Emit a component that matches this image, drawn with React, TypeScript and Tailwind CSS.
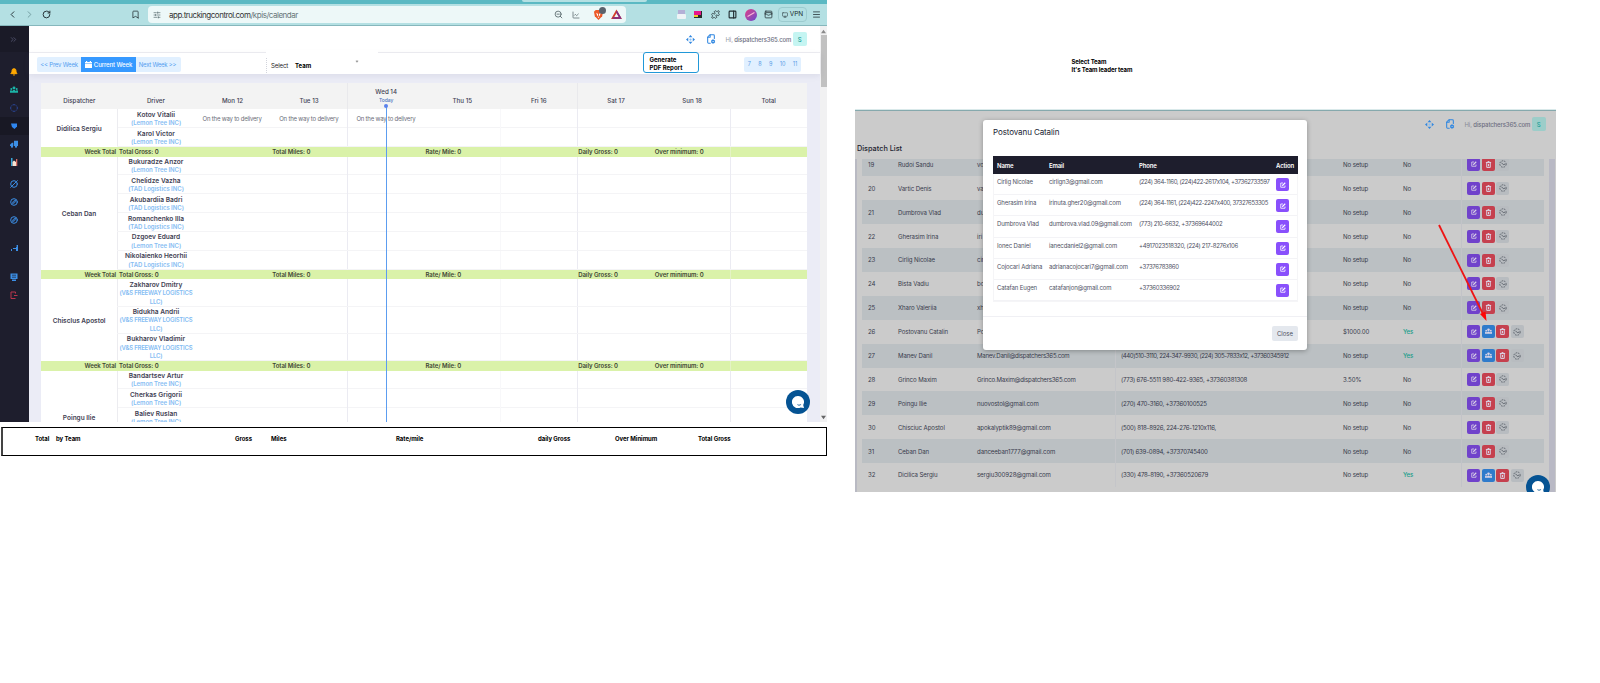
import React from "react";
import {
  ChevronLeft, ChevronRight, RotateCw, Bookmark, ZoomOut, Puzzle, PanelRight, Menu, WalletCards,
  ChevronsRight, Bell, CircleDashed, Compass, CircleSlash2,
  FileCog, SlidersHorizontal, Monitor, LineChart,
} from "lucide-react";

const dispatchers = [
  {
    name: "Didilica Sergiu",
    rowClass: "h-[18.85px]",
    status: true,
    drivers: [["Kotov Vitalii", "(Lemon Tree INC)"], ["Karol Victor", "(Lemon Tree INC)"]],
  },
  {
    name: "Ceban Dan",
    rowClass: "h-[18.85px]",
    status: false,
    drivers: [
      ["Bukuradze Anzor", "(Lemon Tree INC)"],
      ["Chelidze Vazha", "(TAD Logistics INC)"],
      ["Akubardiia Badri", "(TAD Logistics INC)"],
      ["Romanchenko Illa", "(TAD Logistics INC)"],
      ["Dzgoev Eduard", "(Lemon Tree INC)"],
      ["Nikolaienko Heorhii", "(TAD Logistics INC)"],
    ],
  },
  {
    name: "Chisclus Apostol",
    rowClass: "h-[27.2px]",
    status: false,
    drivers: [
      ["Zakharov Dmitry", "(V&S FREEWAY LOGISTICS", "LLC)"],
      ["Bidukha Andrii", "(V&S FREEWAY LOGISTICS", "LLC)"],
      ["Bukharov Vladimir", "(V&S FREEWAY LOGISTICS", "LLC)"],
    ],
  },
  {
    name: "Poingu Ilie",
    rowClass: "h-[18.8px]",
    status: false,
    last: true,
    drivers: [
      ["Bandartsev Artur", "(Lemon Tree INC)"],
      ["Cherkas Grigorii", "(Lemon Tree INC)"],
      ["Baliev Ruslan", "(Lemon Tree INC)"],
    ],
  },
];

const days = ["Dispatcher", "Driver", "Mon 12", "Tue 13", "Wed 14", "Thu 15", "Fri 16", "Sat 17", "Sun 18", "Total"];

function Toolbar() {
  return (
    <div className="relative shrink-0">
      <div className="flex h-1 justify-end bg-[#5bb9c3] pr-[180px]">
        <div className="h-0.5 w-[125px] rounded-b-sm bg-[#b4e0e3]" />
      </div>
      <div className="flex h-[22px] items-center border-b border-[#86b7bc] bg-[#b4e0e3] text-[#202c30]">
        <ChevronLeft className="ml-[7px] size-[11px]" />
        <ChevronRight className="ml-[6px] size-[11px] text-[#6f999c]" />
        <RotateCw className="ml-[7px] size-[9px]" strokeWidth={2.5} />
        <Bookmark className="ml-[80px] size-[9px]" />
        <div className="ml-[8px] flex h-[17px] w-[478px] items-center rounded bg-[#edf8f8]">
          <SlidersHorizontal className="ml-[5px] size-2 text-[#53666a]" />
          <span className="ml-[8px] pt-px text-[8px] tracking-[-0.48px] text-[#333]">
            app.truckingcontrol.com<span className="text-[#68777a]">/kpis/calendar</span>
          </span>
          <ZoomOut className="ml-auto size-[9px] text-[#46565a]" />
          <LineChart className="ml-[9px] size-2 text-[#46565a]" />
          <div className="relative ml-[13px]">
            <svg className="size-[11px]" viewBox="0 0 12 12">
              <path d="M3 1h6l2 2-1 5-4 4-4-4-1-5z" fill="#ed5a29" />
              <path d="M3.5 4l2 1.5V8l-1-1zM8.5 4l-2 1.5V8l1-1zM5 8.5h2L6 9.8z" fill="#fff" />
            </svg>
            <div className="absolute -top-0.5 left-[6px] size-[7px] rounded-full bg-[#5b626c]" />
          </div>
          <svg className="mr-[4px] ml-[7px] size-[11px]" viewBox="0 0 12 12">
            <path d="M6 2.5L1.8 9.8h8.4z" fill="none" stroke="#d5402a" strokeWidth="2" />
            <path d="M6 2.5L10.2 9.8H1.8" fill="none" stroke="#7a2e8e" strokeWidth="1.7" />
          </svg>
        </div>
        <div className="ml-[51px] flex h-[9px] w-[9px] flex-col">
          <div className="mx-px h-[4px] bg-[#b3b0d6]" />
          <div className="flex-1 rounded-[1px] bg-[#eef3f6]" />
        </div>
        <div className="ml-[8px] flex h-[7px] w-[8px] flex-col bg-[#262f2a]">
          <div className="h-[4px] w-[7px] bg-[#e8158c]" />
          <div className="h-[2px] w-[4px] bg-[#f0c92d]" />
        </div>
        <Puzzle className="ml-[9px] size-[9px]" />
        <PanelRight className="ml-[8px] size-[9px]" strokeWidth={3} />
        <div className="ml-[8px] flex size-3 items-center justify-center rounded-full bg-gradient-to-br from-[#e13384] to-[#6840ce]">
          <div className="h-px w-2 -rotate-30 bg-[#ffb3d8]" />
        </div>
        <WalletCards className="ml-[7px] size-[9px]" />
        <div className="ml-[5px] flex h-[15px] w-[29px] items-center justify-center gap-0.5 rounded border border-[#9ccbcf] text-[6.5px]">
          <Monitor className="size-[6px]" />VPN
        </div>
        <Menu className="ml-[5px] size-[9px]" />
      </div>
    </div>
  );
}

function People({ className }: { className: string }) {
  return (
    <svg className={className} viewBox="0 0 12 12" fill="currentColor">
      <circle cx="6" cy="3" r="2.2" /><circle cx="2" cy="4.5" r="1.5" /><circle cx="10" cy="4.5" r="1.5" />
      <path d="M0 10V8c0-2 3-2 3.4 0C4 5.300 8 5.300 8.600 8 9 6 12 6 12 8v2z" />
    </svg>
  );
}

function EditIcon({ className }: { className: string }) {
  return (
    <svg className={className} viewBox="0 0 12 12" fill="none" stroke="currentColor" strokeWidth="1.6">
      <path d="M6 2H1.500v8.500H10V7" /><path d="M4.500 7.500L10.500 1.500" strokeWidth="2.2" />
    </svg>
  );
}

function TrashIcon() {
  return (
    <svg className="size-[7px]" viewBox="0 0 12 12" fill="none" stroke="currentColor" strokeWidth="1.7">
      <path d="M1.500 2.500h9M3 3v8h6V3M6 5v4M4.500 1h3" />
    </svg>
  );
}

function Sidebar() {
  const cell = "flex h-[18px] w-full items-center pl-[9.5px]";
  return (
    <div className="flex w-[29px] shrink-0 flex-col bg-[#1e1e2d] text-[#3c8fe6]">
      <div className="mb-[11px] flex h-[26px] items-center bg-[#1a1a27] pl-[9px] text-[#5a5b78]"><ChevronsRight className="size-[9px]" /></div>
      <div className={cell}><Bell className="size-2 text-[#ffa800]" fill="#ffa800" strokeWidth={3} /></div>
      <div className={cell}><People className="size-2 text-[#1bb5a8]" /></div>
      <div className={cell}><CircleDashed className="size-2 text-[#2d4fae]" strokeWidth={2.5} /></div>
      <div className={`${cell} bg-[#181824]`}>
        <svg className="ml-px size-[6px]" viewBox="0 0 6 6"><path d="M0 .5h6v3L3.500 6 1 4z" fill="#2f86ee" /></svg>
      </div>
      <div className={cell}>
        <svg className="size-2" viewBox="0 0 12 12" fill="currentColor">
          <path d="M6 1h6v8H6zM0 7l3-3h2v5H0z" /><circle cx="3" cy="10" r="1.700" /><circle cx="9" cy="10" r="1.700" />
        </svg>
      </div>
      <div className={cell}>
        <svg className="size-2" viewBox="0 0 8 8">
          <path d="M1 0h1.500v8H1z" fill="#38a5d8" /><path d="M2.500 4L4 2.500 6 4v4H2.500z" fill="#f7e3d2" /><path d="M6 1h1.300v7H6z" fill="#d96e64" />
        </svg>
      </div>
      <div className={`${cell} mt-[4px]`}><CircleSlash2 className="size-2" strokeWidth={3} /></div>
      <div className={cell}><Compass className="size-2" strokeWidth={3} /></div>
      <div className={cell}><Compass className="size-2" strokeWidth={3} /></div>
      <div className={`${cell} mt-[10px]`}>
        <svg className="size-2" viewBox="0 0 8 8"><path d="M1 5h1v2H1zM3 4h3V3h1v4H6V5H3zM6.500 1H8v6H7z" fill="currentColor" /></svg>
      </div>
      <div className={`${cell} mt-[11px]`}>
        <svg className="size-2" viewBox="0 0 8 8">
          <path d="M.5.5h7V6h-7zM2 6.500h4V8H2z" fill="currentColor" /><path d="M2 2.200h4M2 4.200h4" stroke="#1e1e2d" strokeWidth=".7" />
        </svg>
      </div>
      <div className={cell}>
        <svg className="size-2" viewBox="0 0 8 8"><path d="M5.500 1H1v6.500h4.500M5.500 1v1.500M4 4.500h3.500" stroke="#b8344c" fill="none" /></svg>
      </div>
    </div>
  );
}

function Account({ dim }: { dim?: boolean }) {
  return (
    <div className="flex items-center">
      <svg className="size-[9px]" viewBox="0 0 12 12">
        <path d="M6 0l2.5 3h-5zM6 12l2.5-3h-5zM0 6l3-2.5v5zM12 6L9 3.5v5z" fill="#3087e0" />
        <circle cx="6" cy="6" r="1.5" fill="#8cc0f3" />
      </svg>
      <FileCog className="ml-[11px] size-[10px] -scale-x-100 text-[#3087e0]" strokeWidth={2.5} />
      <span className="ml-[10px] w-[63px] text-[6px] font-medium tracking-[-0.12px] whitespace-nowrap text-[#6b6d80]">
        <span className="font-normal opacity-70">Hi, </span>dispatchers365.com
      </span>
      <div className={`ml-[4px] flex size-[14.5px] items-center justify-center rounded-[2px] text-[6px] font-medium text-[#1b9f98] ${dim ? "bg-[#9ccdc9]" : "bg-[#c5f5f2]"}`}>S</div>
    </div>
  );
}

function WeekTotal() {
  return (
    <div className="grid h-[9.7px] grid-cols-10 items-center bg-[#daf2a9] pt-[1px] text-[6px] leading-none font-semibold tracking-[-0.05px] whitespace-nowrap text-[#3d4632]">
      <span className="pr-[1.5px] text-right">Week Total</span>
      <span className="col-span-2 pl-[1.5px]">Total Gross: 0</span>
      <span className="col-span-2 pl-[1.5px]">Total Miles: 0</span>
      <span className="col-span-2 pl-[1.5px]">Rate/ Mile: 0</span>
      <span className="pl-[1px]">Daily Gross: 0</span>
      <span className="pl-[1px]">Over minimum: 0</span>
      <span className="-mt-px h-[9.7px] border-l border-[#e4f3c4]" />
    </div>
  );
}

function Calendar() {
  return (
    <div className="relative h-[339px] w-[766px] overflow-hidden bg-white">
      <div className="grid h-[26.2px] grid-cols-10 bg-[#f3f3f3] text-center text-[6.2px] leading-[8px] font-medium text-[#3f4254]">
        {days.map((d, i) => (
          <div key={d} className={`flex flex-col items-center ${i === 4 || i === 7 ? "border-l border-[#e9e9ec]" : ""}`}>
            {i === 4 ? (
              <><span className="mt-[5px]">Wed 14</span><span className="text-[5px] text-[#4c74bd]">Today</span></>
            ) : <span className="mt-[13.5px]">{d}</span>}
          </div>
        ))}
      </div>
      {dispatchers.map((d) => (
        <div key={d.name}>
          <div className={`flex ${d.last ? "h-[94px]" : ""}`}>
            <div className="flex w-[76.2px] shrink-0 items-center justify-center pt-[1px] text-[6.5px] leading-[8px] font-semibold text-[#3f4254]">{d.name}</div>
            <div className="flex-1">
              {d.drivers.map(([name, company, suffix]) => (
                <div key={name} className={`grid grid-cols-9 border-b border-[#f4f4f6] ${d.rowClass}`}>
                  <div className="border-l border-[#ececf0] pt-[1.5px] text-center text-[6.6px] leading-[8.4px] font-semibold whitespace-nowrap text-[#3f4254]">
                    {name}
                    <div className={`text-[6px] font-semibold text-[#86bdf3] ${suffix ? "tracking-[-0.22px]" : "tracking-[-0.04px]"}`}>{company}{suffix && <><br />{suffix}</>}</div>
                  </div>
                  {[2, 3, 4, 5, 6, 7, 8, 9].map((n) => (
                    <div key={n} className={`text-center text-[6px] leading-[19.5px] tracking-[-0.2px] whitespace-nowrap text-[#6b6d78] ${n === 4 || n === 7 || n === 9 ? "border-l border-[#ebebf2]" : n === 6 ? "border-l border-[#f8f8fa]" : ""}`}>
                      {d.status && name === "Kotov Vitalii" && n < 5 ? "On the way to delivery" : ""}
                    </div>
                  ))}
                </div>
              ))}
            </div>
          </div>
          {!d.last && <WeekTotal />}
        </div>
      ))}
      <div className="absolute top-[23px] left-[344.5px] h-[316px] w-px bg-[#5c9df0]" />
      <div className="absolute top-[21px] left-[343px] size-1 rounded-full bg-[#5b82ec]" />
    </div>
  );
}

function ChatBubble({ className }: { className: string }) {
  return (
    <div className={`absolute flex size-6 items-center justify-center rounded-full bg-[#055393] ${className}`}>
      <svg viewBox="0 0 12 12" className="size-3">
        <path d="M6 0a6 6 0 1 0 2.5 11.4L12 12l-.8-3A6 6 0 0 0 6 0z" fill="#fff" />
        <path d="M5 8.2c1.3.7 3 .7 4.2-.2-.4 2-3.4 2.2-4.2.2z" fill="#055393" />
      </svg>
    </div>
  );
}

function CalendarWindow() {
  return (
    <div className="relative flex h-[422px] w-[827px] flex-col overflow-hidden">
      <Toolbar />
      <div className="flex min-h-0 flex-1">
        <Sidebar />
        <div className="flex w-[791px] flex-col bg-[#ebecf6]">
          <div className="flex h-[27px] shrink-0 items-center justify-end border-b border-[#eeeef2] bg-white pr-[13px]"><Account /></div>
          <div className="relative flex h-[21px] shrink-0 items-center bg-white pt-[2px] text-[6px] shadow-[0_2px_6px_rgba(80,80,120,0.1)]">
            <div className="ml-[8px] flex h-[15px] items-center overflow-hidden rounded-[2px] bg-[#e1f0ff] text-[#559ff0]">
              <span className="w-[44px] text-center tracking-[-0.2px] whitespace-nowrap">&lt;&lt; Prev Week</span>
              <span className="flex h-full w-[55px] items-center justify-center gap-[2px] bg-[#3699ff] font-medium tracking-[-0.1px] whitespace-nowrap text-white">
                <svg className="size-[7px]" viewBox="0 0 7 7"><path d="M1 0h1.2v1h2.6V0H6v1h1v1.4H0V1h1zM0 3h7v4H0z" fill="#fff" /></svg>
                Current Week
              </span>
              <span className="w-[45px] pr-[2px] text-center tracking-[-0.25px] whitespace-nowrap">Next Week &gt;&gt;</span>
            </div>
            <div className="absolute -top-[3px] left-[237px] flex h-[22px] w-[112px] items-center bg-white pt-[8px] text-[6px]">
              <div className="flex h-[15px] items-center border-l border-dotted border-[#d2d4dc] pl-[4px]">
                <span className="w-[24px] tracking-[-0.1px] text-[#222]">Select</span>
                <span className="font-bold text-black">Team</span>
              </div>
              <span className="mb-[8px] ml-[45px] size-[2px] rotate-45 border-r border-b border-[#999]" />
            </div>
            <div className="absolute -top-px left-[613.5px] flex h-[21px] w-[56px] items-center rounded-[3px] border border-[#2198d8] pt-[3px] pl-[6px] text-[6px] leading-[8px] font-bold text-black">
              <span>Generate<br />PDF Report</span>
            </div>
            <div className="mr-[19px] ml-auto flex h-[15px] w-[57px] items-center justify-around rounded-[2px] bg-[#e1f0ff] text-[5.5px] text-[#5a9de6]">
              <span>7</span><span>8</span><span>9</span><span>10</span><span>11</span>
            </div>
          </div>
          <div className="pt-[9px] pl-[12px]"><Calendar /></div>
        </div>
        <div className="flex flex-1 flex-col items-center bg-[#f1f1f2]">
          <svg className="mt-[3px] h-[5px] w-[5px]" viewBox="0 0 6 6"><path d="M0 5l3-4 3 4z" fill="#8a8a8a" /></svg>
          <div className="mt-px h-[52px] w-[6px] bg-[#c1c1c1]" />
          <svg className="mt-auto mb-[2px] h-[5px] w-[5px]" viewBox="0 0 6 6"><path d="M0 1l3 4 3-4z" fill="#666" /></svg>
        </div>
      </div>
      <ChatBubble className="top-[390px] left-[786px]" />
    </div>
  );
}

function TeamTotals() {
  return (
    <div className="mt-[5px] ml-[1px] flex h-[29px] w-[826px] items-center border border-l-2 border-black border-l-[#444] pb-[6px] text-[6px] font-bold tracking-[-0.05px] whitespace-pre text-black">
      <span className="ml-[32px] w-[21px]">Total</span>
      <span className="w-[179px]">by Team</span>
      <span className="w-[36px]">Gross</span>
      <span className="w-[125px]">Miles</span>
      <span className="w-[142px]">Rate/mile</span>
      <span className="w-[77px]">daily Gross</span>
      <span className="w-[83px]">Over Minimum</span>
      <span>Total Gross</span>
    </div>
  );
}

const rows: [string, string, string, string, string, boolean][] = [
  ["19", "Rudoi Sandu", "vo", "", "No setup", false],
  ["20", "Vartic Denis", "va", "", "No setup", false],
  ["21", "Dumbrova Vlad", "du", "", "No setup", false],
  ["22", "Gherasim Irina", "iri", "", "No setup", false],
  ["23", "Cirlig Nicolae", "cir", "", "No setup", false],
  ["24", "Bista Vadiu", "bo", "", "No setup", false],
  ["25", "Xharo Valeriia", "xh", "", "No setup", false],
  ["26", "Postovanu Catalin", "Po", "", "$1000.00", true],
  ["27", "Manev Danil", "Manev.Danil@dispatchers365.com", "(440)510-3110, 224-347-9930, (224) 305-7833x12, +37360345912", "No setup", true],
  ["28", "Grinco Maxim", "Grinco.Maxim@dispatchers365.com", "(773) 676-5511 980-422-9365, +37360381308", "3.50%", false],
  ["29", "Poingu Ilie", "nuovostol@gmail.com", "(270) 470-3160, +37360100525", "No setup", false],
  ["30", "Chisciuc Apostol", "apokalyptik89@gmail.com", "(500) 818-8926, 224-276-1210x116,", "No setup", false],
  ["31", "Ceban Dan", "danceeban1777@gmail.com", "(701) 639-0894, +37370745400", "No setup", false],
  ["32", "Dicilica Sergiu", "sergiu300928@gmail.com", "(330) 478-8190, +37360520679", "No setup", true],
];

function DispatchRow({ row, index }: { row: (typeof rows)[number]; index: number }) {
  const [num, name, email, phone, salary, leader] = row;
  const btn = "flex size-[13px] items-center justify-center rounded-[2px] text-[#dcd5e6]";
  return (
    <div className={`flex h-[23.9px] shrink-0 items-center text-[6.1px] tracking-[-0.1px] whitespace-nowrap text-[#373a4c] ${index % 2 === 0 ? "bg-[#bbc0c3]" : "bg-[#cbcbcb]"}`}>
      <span className="w-[30px] shrink-0 pl-[6px]">{num}</span>
      <span className="w-[79px] shrink-0 pl-[6px]">{name}</span>
      <span className={`w-[144px] shrink-0 pl-[6px] ${index === 8 ? "tracking-[-0.26px]" : index === 9 ? "tracking-[-0.2px]" : ""}`}>{email}</span>
      <span className={`flex h-full w-[222px] shrink-0 items-center border-l border-[#c4c5c9] pl-[5px] ${index === 8 ? "tracking-[-0.44px]" : "tracking-[-0.22px]"}`}>{phone}</span>
      <span className="w-[60px] shrink-0 pl-[6px]">{salary}</span>
      <span className={`w-[64px] shrink-0 pl-[6px] ${leader ? "font-medium text-[#179c88]" : ""}`}>{leader ? "Yes" : "No"}</span>
      <div className="flex h-full flex-1 items-center gap-[1.6px] border-l border-[#c2c3c8] pl-[5px]">
        <div className={`${btn} bg-[#7042cb]`}><EditIcon className="size-[6px]" /></div>
        {leader && <div className={`${btn} bg-[#2f7bcb]`}><People className="size-[7px]" /></div>}
        <div className={`${btn} bg-[#c5404e]`}><TrashIcon /></div>
        <div className={`${btn} bg-[#b8bcc0]`}>
          <svg className="size-2" viewBox="0 0 12 12" fill="none" stroke="#596068" strokeWidth="1.4">
            <circle cx="6" cy="6" r="4.800" strokeDasharray="2.500 1.500" /><path d="M3.500 4l3 3 3-1" />
          </svg>
        </div>
      </div>
    </div>
  );
}

const members = [
  ["Cirlig Nicolae", "cirlign3@gmail.com", "(224) 364-1160, (224)422-2617x104, +37362733597"],
  ["Gherasim Irina", "irinuta.gher20@gmail.com", "(224) 364-1161, (224)422-2247x400, 37327653305"],
  ["Dumbrova Vlad", "dumbrova.vlad.09@gmail.com", "(773) 210-6632, +37369644002"],
  ["Ionec Daniel", "ianecdaniel2@gmail.com", "+4917023518320, (224) 217-8276x106"],
  ["Cojocari Adriana", "adrianacojocari7@gmail.com", "+37376783860"],
  ["Catafan Eugen", "catafanjon@gmail.com", "+37360336902"],
];

function TeamModal() {
  return (
    <div className="absolute top-[11px] left-[128px] flex h-[230px] w-[324px] flex-col rounded-[3px] bg-white shadow-[0_1px_5px_rgba(0,0,0,0.3)]">
      <div className="flex h-[36px] shrink-0 items-start pt-[6px] pl-[10px] text-[8px] leading-[13px] tracking-[-0.1px] text-[#181c32]">Postovanu Catalin</div>
      <div className="mx-[9.5px] border-x border-b border-[#f5f5f7] text-[6px] tracking-[-0.13px] whitespace-nowrap text-[#4f5265]">
        <div className="-mx-px flex h-[18px] items-center bg-[#1e1e2d] pl-[4.5px] font-semibold text-white">
          <span className="w-[52px]">Name</span><span className="w-[90px]">Email</span><span className="w-[137px]">Phone</span><span>Action</span>
        </div>
        {members.map(([name, email, phone]) => (
          <div key={name} className="flex h-[21.2px] items-start border-b border-[#f3f3f6] pl-[3.5px]">
            <span className="w-[52px] pt-[3px]">{name}</span>
            <span className="w-[90px] pt-[3px]">{email}</span>
            <span className={`w-[137px] pt-[3px] ${phone.length > 40 ? "tracking-[-0.4px]" : "tracking-[-0.32px]"}`}>{phone}</span>
            <div className="mt-[4px] flex size-[13px] items-center justify-center rounded-[2px] bg-[#8950fc]"><EditIcon className="size-[6px] text-white" /></div>
          </div>
        ))}
      </div>
      <div className="mt-auto flex h-[34px] items-center justify-end border-t border-[#f0f0f4] pr-[9px]">
        <div className="flex h-[15px] w-[26px] items-center justify-center rounded-[2px] bg-[#e4e8ee] text-[6px] text-[#4c4f61]">Close</div>
      </div>
    </div>
  );
}

function DispatchWindow() {
  return (
    <div className="relative flex h-[383px] w-[701px] flex-col overflow-hidden bg-[#cbcbcb]">
      <div className="h-px shrink-0 bg-[#d9e9ea]" />
      <div className="h-px shrink-0 bg-[#86a9ad]" />
      <div className="flex h-[48px] shrink-0 flex-col">
        <div className="flex h-[26px] items-center justify-end pr-[10px]"><Account dim /></div>
        <div className="pt-[6px] pl-[2px] text-[7.3px] leading-[12px] font-medium text-[#22242f]">Dispatch List</div>
      </div>
      <div className="flex min-h-0 flex-1 overflow-hidden">
        <div className="mr-[5px] w-[2px] shrink-0 bg-[#b9bac3]" />
        <div className="-mt-[6.5px] flex w-[682px] flex-col">
          {rows.map((r, i) => <DispatchRow key={r[0]} row={r} index={i} />)}
        </div>
        <div className="ml-[5px] w-[6px] bg-[#b9b9c5]" />
      </div>
      <TeamModal />
      <ChatBubble className="top-[366px] left-[670.5px]" />
      <svg className="absolute top-[115px] left-[580px] h-[100px] w-[60px]" viewBox="0 0 60 100">
        <path d="M4 1L49 92" stroke="#ee1515" strokeWidth="1.8" />
        <path d="M51.5 97l-6.5-7 5.500-2.500z" fill="#ff0505" />
      </svg>
    </div>
  );
}

export default function App() {
  return (
    <div className="flex h-[683px] w-[1600px] overflow-hidden bg-white font-['Inter','Liberation_Sans',sans-serif]">
      <div className="flex w-[855px] flex-col">
        <CalendarWindow />
        <TeamTotals />
      </div>
      <div className="flex w-[745px] flex-col">
        <div className="h-[109px] pt-[58px] pl-[216.5px] text-[6px] leading-[8px] font-bold tracking-[-0.1px] text-black">Select Team<br />It's Team leader team</div>
        <DispatchWindow />
      </div>
    </div>
  );
}
